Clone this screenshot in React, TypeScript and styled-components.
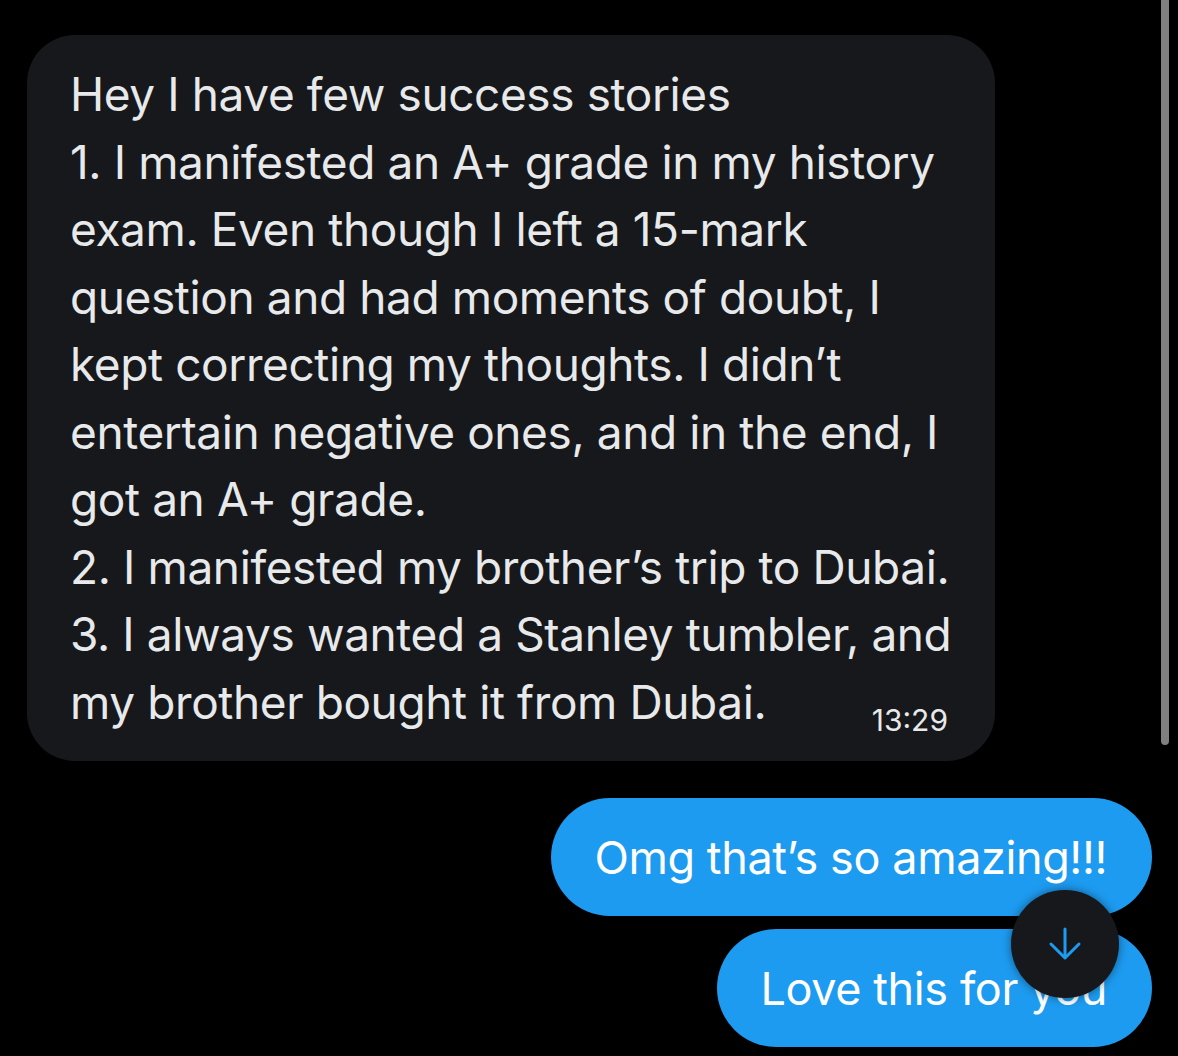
import styled, { createGlobalStyle } from "styled-components";

const GlobalStyle = createGlobalStyle`
  html, body {
    margin: 0;
    padding: 0;
    background: #000;
  }
  body {
    font-family: Inter, "Noto Sans", "Liberation Sans", sans-serif;
    -webkit-font-smoothing: antialiased;
  }
`;

const Screen = styled.div`
  position: relative;
  width: 1178px;
  height: 1056px;
  overflow: hidden;
  background: #000;
`;

const Thread = styled.div`
  display: flex;
  flex-direction: column;
  padding: 35px 26px 0 27px;
`;

const Received = styled.div`
  width: 968px;
  box-sizing: border-box;
  padding: 26px 47px 25px 43px;
  background: #16181c;
  border-radius: 48px;
  color: #e7e9ea;
  font-size: 46px;
  line-height: 67.5px;
  letter-spacing: -0.4px;
`;

const Line = styled.div`
  white-space: nowrap;
`;

const LastLine = styled.div`
  display: flex;
  align-items: baseline;
  justify-content: space-between;
  white-space: nowrap;
`;

const Time = styled.span`
  font-size: 30px;
  line-height: 1;
  letter-spacing: 0;
  color: #e7e9ea;
  transform: translateY(12px);
`;

const Sent = styled.div<{ $gap: number }>`
  align-self: flex-end;
  margin-top: ${(p) => p.$gap}px;
  height: 118px;
  box-sizing: border-box;
  padding: 0 45px 0 43px;
  display: flex;
  align-items: center;
  background: #1d9bf0;
  border-radius: 59px;
  color: #fff;
  font-size: 45px;
  letter-spacing: -0.4px;
  white-space: nowrap;
`;

const ScrollThumb = styled.div`
  position: absolute;
  top: 0;
  left: 1161px;
  width: 8px;
  height: 745px;
  border-radius: 0 0 4px 4px;
  background: #808080;
`;

const JumpButton = styled.div`
  position: absolute;
  left: 1011px;
  top: 890px;
  width: 108px;
  height: 108px;
  border-radius: 50%;
  background: #16181c;
  box-shadow: 0 0 10px rgba(0, 0, 0, 0.45);
  display: flex;
  align-items: center;
  justify-content: center;
`;

const lines = [
  "Hey I have few success stories",
  "1. I manifested an A+ grade in my history",
  "exam. Even though I left a 15-mark",
  "question and had moments of doubt, I",
  "kept correcting my thoughts. I didn\u2019t",
  "entertain negative ones, and in the end, I",
  "got an A+ grade.",
  "2. I manifested my brother\u2019s trip to Dubai.",
  "3. I always wanted a Stanley tumbler, and",
];

export default function App() {
  return (
    <Screen>
      <GlobalStyle />
      <Thread>
        <Received>
          {lines.map((l) => (
            <Line key={l}>{l}</Line>
          ))}
          <LastLine>
            <span>my brother bought it from Dubai.</span>
            <Time>13:29</Time>
          </LastLine>
        </Received>
        <Sent $gap={37}>Omg that’s so amazing!!!</Sent>
        <Sent $gap={13}>Love this for you</Sent>
      </Thread>
      <ScrollThumb />
      <JumpButton>
        <svg width="34" height="36" viewBox="0 0 34 36" fill="none">
          <path
            d="M17 3v29M3 18l14 14 14-14"
            stroke="#1d9bf0"
            strokeWidth="3"
            strokeLinecap="round"
            strokeLinejoin="round"
          />
        </svg>
      </JumpButton>
    </Screen>
  );
}
